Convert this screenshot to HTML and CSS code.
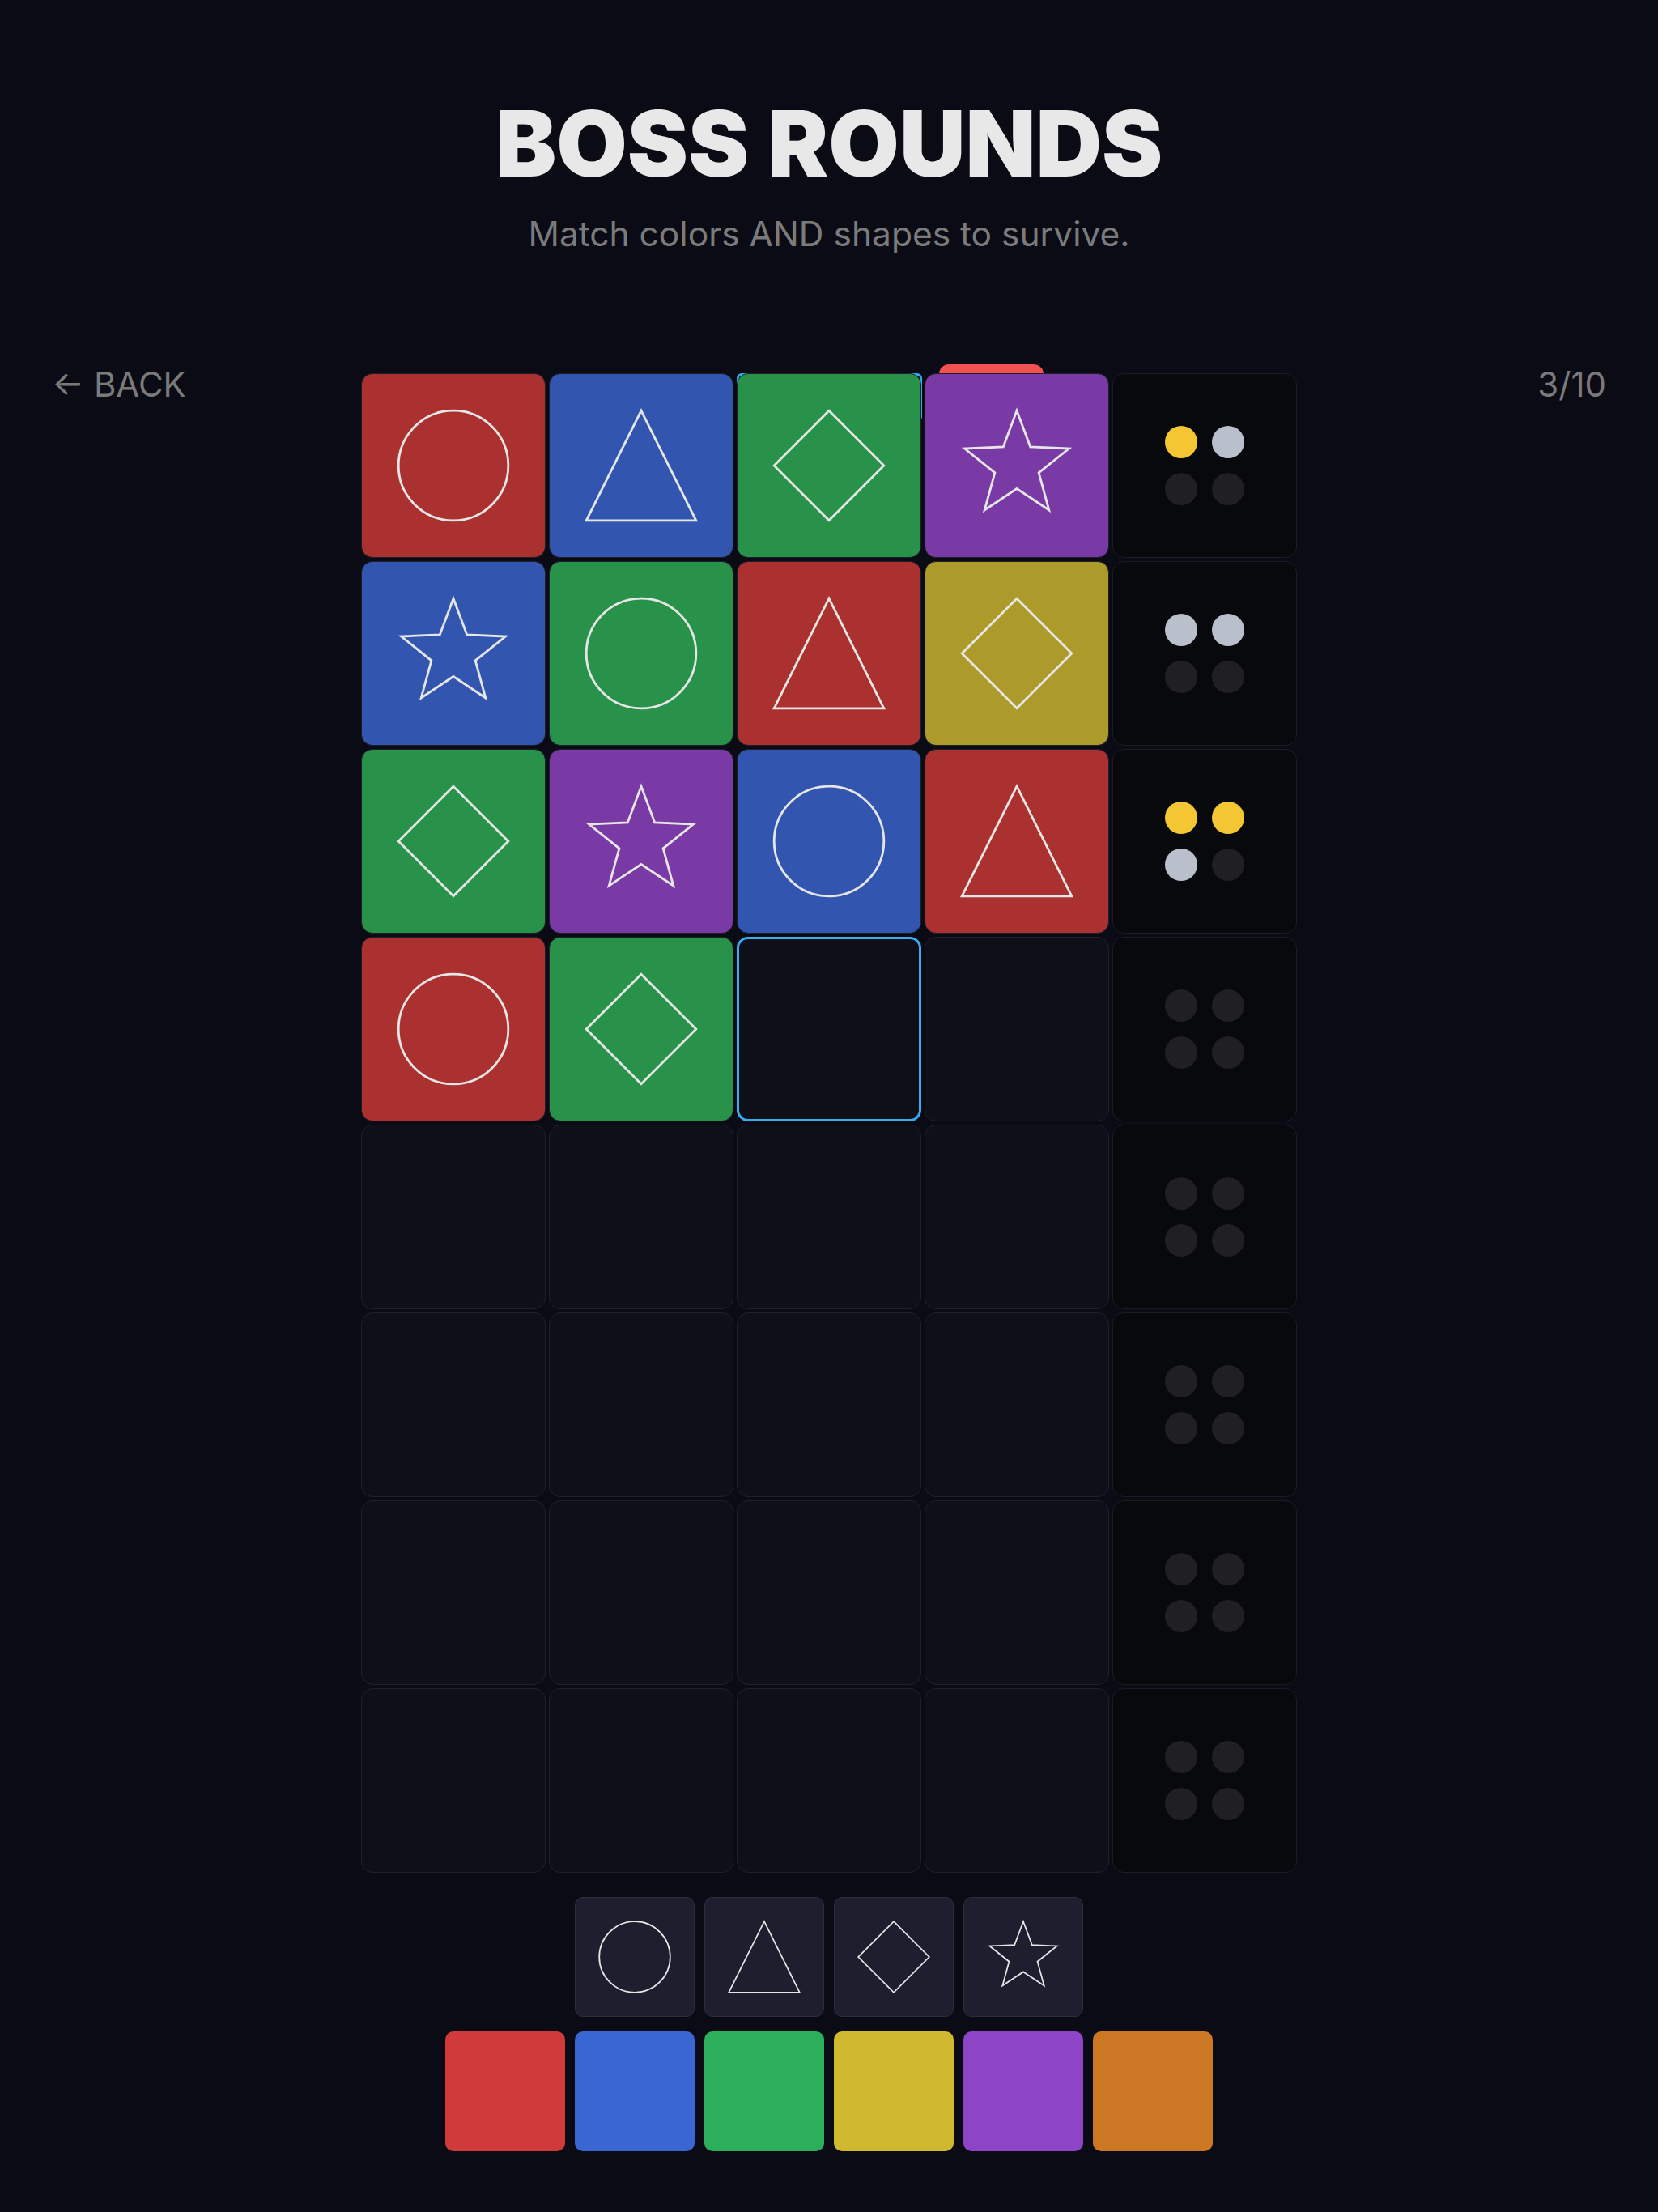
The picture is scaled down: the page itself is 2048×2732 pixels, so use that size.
FILE: index.html
```html
<!DOCTYPE html>
<html lang="en">
<head>
<meta charset="utf-8">
<title>Boss Rounds</title>
<link rel="stylesheet" href="styles.css">
</head>
<body>
<svg class="defs" width="0" height="0" aria-hidden="true">
  <defs>
    <symbol id="s-circle" viewBox="0 0 100 100"><circle cx="50" cy="50" r="30"/></symbol>
    <symbol id="s-triangle" viewBox="0 0 100 100"><polygon points="50,20 80,80 20,80"/></symbol>
    <symbol id="s-diamond" viewBox="0 0 100 100"><polygon points="50,20 80,50 50,80 20,50"/></symbol>
    <symbol id="s-star" viewBox="0 0 100 100"><polygon points="50,20 57.4,39.8 78.5,40.7 62,53.9 67.6,74.3 50,62.6 32.4,74.3 38,53.9 21.5,40.7 42.6,39.8"/></symbol>
  </defs>
</svg>

<header class="header">
  <h1 class="title">BOSS ROUNDS</h1>
  <p class="subtitle">Match colors AND shapes to survive.</p>
</header>

<main class="stage">
  <div class="side side-left"><span class="back">← BACK</span></div>

  <div class="board">
    <div class="peek peek-blue"></div>
    <div class="peek peek-red"></div>
    <div class="grid">
      <!-- row 1 -->
      <div class="cell c-red"><svg class="shape"><use href="#s-circle"/></svg></div>
      <div class="cell c-blue"><svg class="shape"><use href="#s-triangle"/></svg></div>
      <div class="cell c-green"><svg class="shape"><use href="#s-diamond"/></svg></div>
      <div class="cell c-purple"><svg class="shape"><use href="#s-star"/></svg></div>
      <div class="pegs"><span class="peg p-gold"></span><span class="peg p-silver"></span><span class="peg"></span><span class="peg"></span></div>
      <!-- row 2 -->
      <div class="cell c-blue"><svg class="shape"><use href="#s-star"/></svg></div>
      <div class="cell c-green"><svg class="shape"><use href="#s-circle"/></svg></div>
      <div class="cell c-red"><svg class="shape"><use href="#s-triangle"/></svg></div>
      <div class="cell c-yellow"><svg class="shape"><use href="#s-diamond"/></svg></div>
      <div class="pegs"><span class="peg p-silver"></span><span class="peg p-silver"></span><span class="peg"></span><span class="peg"></span></div>
      <!-- row 3 -->
      <div class="cell c-green"><svg class="shape"><use href="#s-diamond"/></svg></div>
      <div class="cell c-purple"><svg class="shape"><use href="#s-star"/></svg></div>
      <div class="cell c-blue"><svg class="shape"><use href="#s-circle"/></svg></div>
      <div class="cell c-red"><svg class="shape"><use href="#s-triangle"/></svg></div>
      <div class="pegs"><span class="peg p-gold"></span><span class="peg p-gold"></span><span class="peg p-silver"></span><span class="peg"></span></div>
      <!-- row 4 -->
      <div class="cell c-red"><svg class="shape"><use href="#s-circle"/></svg></div>
      <div class="cell c-green"><svg class="shape"><use href="#s-diamond"/></svg></div>
      <div class="cell empty active"></div>
      <div class="cell empty"></div>
      <div class="pegs"><span class="peg"></span><span class="peg"></span><span class="peg"></span><span class="peg"></span></div>
      <!-- row 5 -->
      <div class="cell empty"></div><div class="cell empty"></div><div class="cell empty"></div><div class="cell empty"></div>
      <div class="pegs"><span class="peg"></span><span class="peg"></span><span class="peg"></span><span class="peg"></span></div>
      <!-- row 6 -->
      <div class="cell empty"></div><div class="cell empty"></div><div class="cell empty"></div><div class="cell empty"></div>
      <div class="pegs"><span class="peg"></span><span class="peg"></span><span class="peg"></span><span class="peg"></span></div>
      <!-- row 7 -->
      <div class="cell empty"></div><div class="cell empty"></div><div class="cell empty"></div><div class="cell empty"></div>
      <div class="pegs"><span class="peg"></span><span class="peg"></span><span class="peg"></span><span class="peg"></span></div>
      <!-- row 8 -->
      <div class="cell empty"></div><div class="cell empty"></div><div class="cell empty"></div><div class="cell empty"></div>
      <div class="pegs"><span class="peg"></span><span class="peg"></span><span class="peg"></span><span class="peg"></span></div>
    </div>
  </div>

  <div class="side side-right"><span class="counter">3/10</span></div>
</main>

<section class="controls">
  <div class="shape-row">
    <button class="shape-btn"><svg class="shape"><use href="#s-circle"/></svg></button>
    <button class="shape-btn"><svg class="shape"><use href="#s-triangle"/></svg></button>
    <button class="shape-btn"><svg class="shape"><use href="#s-diamond"/></svg></button>
    <button class="shape-btn"><svg class="shape"><use href="#s-star"/></svg></button>
  </div>
  <div class="color-row">
    <button class="color-btn b-red"></button>
    <button class="color-btn b-blue"></button>
    <button class="color-btn b-green"></button>
    <button class="color-btn b-yellow"></button>
    <button class="color-btn b-purple"></button>
    <button class="color-btn b-orange"></button>
  </div>
</section>
</body>
</html>
```

FILE: styles.css
```css
* { box-sizing: border-box; }

html, body {
  margin: 0;
  padding: 0;
  background: #0a0b14;
  font-family: Inter, "Noto Sans", "Liberation Sans", sans-serif;
  color: #e8e8e8;
}

body {
  width: 2048px;
  min-height: 2732px;
}

.defs {
  position: absolute;
  width: 0;
  height: 0;
  overflow: hidden;
}

.header {
  padding-top: 121px;
  text-align: center;
}

.title {
  margin: 0;
  font-size: 113px;
  line-height: 1;
  font-weight: 900;
  letter-spacing: 0;
  color: #e8e8e8;
}

.subtitle {
  margin: 34px 0 0;
  font-size: 42.5px;
  line-height: 1;
  font-weight: 400;
  color: #7b7b7b;
}

.stage {
  margin-top: 143px;
  display: grid;
  grid-template-columns: 1fr auto 1fr;
  align-items: start;
  padding: 0 64px;
}

.side {
  font-size: 42px;
  line-height: 1;
  color: #7a7a7a;
}

.side-right {
  justify-self: end;
}

.board {
  position: relative;
  margin-top: 7px;
}

.peek {
  position: absolute;
  z-index: 0;
}

.peek-blue {
  left: 464px;
  top: 0;
  width: 229px;
  height: 60px;
  border: 3px solid #35a6e8;
  border-radius: 6px;
}

.peek-red {
  left: 714px;
  top: -11px;
  width: 129px;
  height: 60px;
  background: #f25151;
  border-radius: 12px 12px 0 0;
}

.grid {
  position: relative;
  z-index: 1;
  display: grid;
  grid-template-columns: repeat(5, 228px);
  grid-auto-rows: 228px;
  gap: 4px;
}

.cell {
  border-radius: 14px;
  border: 1px solid #1d1e28;
  display: flex;
  align-items: center;
  justify-content: center;
}

.shape {
  width: 100%;
  height: 100%;
  display: block;
  fill: none;
  stroke: #e6e6e6;
}

.shape use {
  stroke-width: 1.25px;
}

.shape circle, .shape polygon {
  vector-effect: non-scaling-stroke;
}

.c-red { background: #ab3030; }
.c-blue { background: #3256b0; }
.c-green { background: #28924a; }
.c-purple { background: #7a3aa6; }
.c-yellow { background: #ac9a2a; }

.empty {
  background: #0e0f18;
  border-color: #1f2029;
}

.active {
  border: 3px solid #38acf0;
}

.pegs {
  background: #08090d;
  border: 1px solid #1c1d23;
  border-radius: 14px;
  display: grid;
  grid-template-columns: 40px 40px;
  grid-template-rows: 40px 40px;
  gap: 18px;
  align-content: center;
  justify-content: center;
}

.peg {
  width: 40px;
  height: 40px;
  border-radius: 50%;
  background: #1f1f24;
}

.p-gold { background: #f4c633; }
.p-silver { background: #b9bfcb; }

.controls {
  margin-top: 30px;
  display: flex;
  flex-direction: column;
  align-items: center;
  gap: 18px;
}

.shape-row, .color-row {
  display: flex;
  gap: 12px;
}

button {
  padding: 0;
  margin: 0;
  font: inherit;
  cursor: pointer;
}

.shape-btn {
  width: 148px;
  height: 148px;
  background: #1e1f2e;
  border: 1px solid #2d2e3b;
  border-radius: 10px;
  display: flex;
}

.shape-btn .shape use {
  stroke-width: 1.2px;
}

.color-btn {
  width: 148px;
  height: 148px;
  border: none;
  border-radius: 10px;
}

.b-red { background: #d13a3a; }
.b-blue { background: #3a66d2; }
.b-green { background: #2dae5a; }
.b-yellow { background: #d0b930; }
.b-purple { background: #8e44c6; }
.b-orange { background: #cc7723; }
```
